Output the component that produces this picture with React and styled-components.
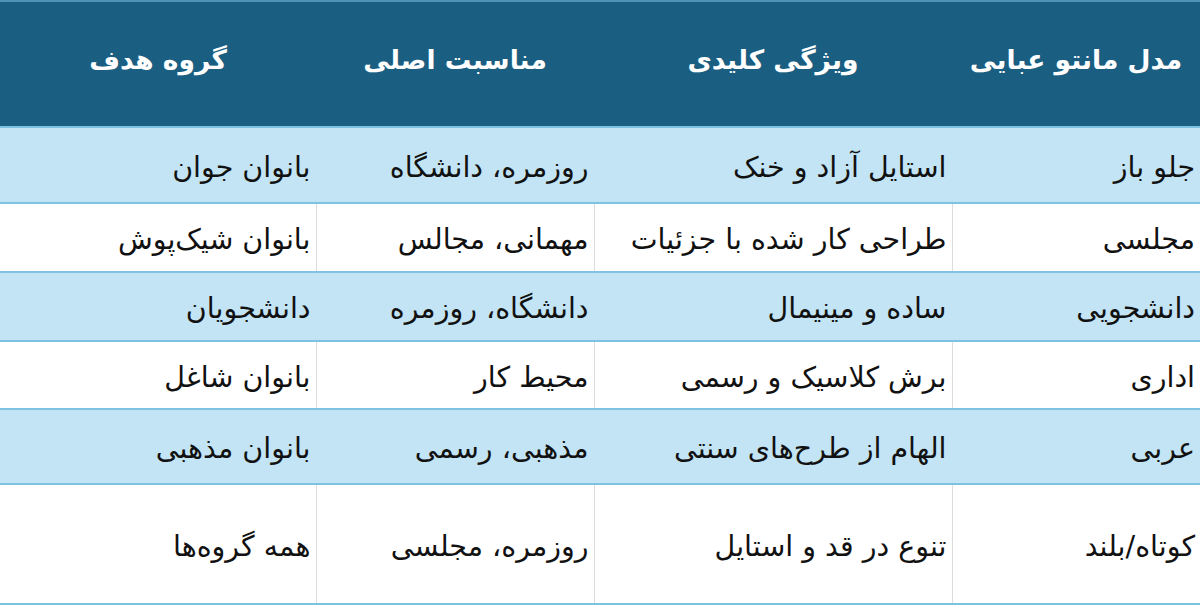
import React from 'react';
import styled, { createGlobalStyle } from 'styled-components';

const Global = createGlobalStyle`
    html, body {
        margin: 0;
        padding: 0;
        background: #ffffff;
    }
    body {
        font-family: "DejaVu Sans", "Noto Sans", sans-serif;
    }
`;

const Wrap = styled.div`
    width: 1200px;
    height: 606px;
    overflow: hidden;
    background: #ffffff;
`;

const Table = styled.table`
    direction: rtl;
    width: 1200px;
    border-collapse: collapse;
    table-layout: fixed;
    border-top: 2px solid #4f94b8;
`;

const HeadCell = styled.th`
    height: 114px;
    background: #1a5e82;
    color: #ffffff;
    font-size: 26.5px;
    font-weight: bold;
    text-align: center;
    padding: 0 12px 10px;
    border-bottom: 2px solid #7ec2e2;
`;

const Row = styled.tr`
    height: ${props => props.h}px;
    background: ${props => (props.shaded ? '#c2e4f4' : '#ffffff')};
    border-bottom: 2px solid #7ec2e2;
`;

const Cell = styled.td`
    text-align: right;
    padding: 4px 5px 0 6px;
    font-size: 28.5px;
    color: #111111;
    white-space: nowrap;
    border-left: 1px solid ${props => (props.shaded ? '#c2e4f4' : '#dcdcdc')};

    &:last-child {
        border-left: none;
    }
`;

const columns = [
    { title: 'مدل مانتو عبایی', width: 248 },
    { title: 'ویژگی کلیدی', width: 358 },
    { title: 'مناسبت اصلی', width: 278 },
    { title: 'گروه هدف', width: 316 },
];

const rows = [
    { h: 76, cells: ['جلو باز', 'استایل آزاد و خنک', 'روزمره، دانشگاه', 'بانوان جوان'] },
    { h: 69, cells: ['مجلسی', 'طراحی کار شده با جزئیات', 'مهمانی، مجالس', 'بانوان شیک‌پوش'] },
    { h: 69, cells: ['دانشجویی', 'ساده و مینیمال', 'دانشگاه، روزمره', 'دانشجویان'] },
    { h: 68, cells: ['اداری', 'برش کلاسیک و رسمی', 'محیط کار', 'بانوان شاغل'] },
    { h: 75, cells: ['عربی', 'الهام از طرح‌های سنتی', 'مذهبی، رسمی', 'بانوان مذهبی'] },
    { h: 120, cells: ['کوتاه/بلند', 'تنوع در قد و استایل', 'روزمره، مجلسی', 'همه گروه‌ها'] },
];

const App = () => {
    return (
        <Wrap>
            <Global />
            <Table>
                <colgroup>
                    {columns.map(c => (
                        <col key={c.title} style={{ width: c.width }} />
                    ))}
                </colgroup>
                <thead>
                    <tr>
                        {columns.map(c => (
                            <HeadCell key={c.title}>{c.title}</HeadCell>
                        ))}
                    </tr>
                </thead>
                <tbody>
                    {rows.map((r, i) => (
                        <Row key={i} h={r.h} shaded={i % 2 === 0 ? 1 : 0}>
                            {r.cells.map((t, j) => (
                                <Cell key={j} shaded={i % 2 === 0 ? 1 : 0}>{t}</Cell>
                            ))}
                        </Row>
                    ))}
                </tbody>
            </Table>
        </Wrap>
    );
};

export default App;
